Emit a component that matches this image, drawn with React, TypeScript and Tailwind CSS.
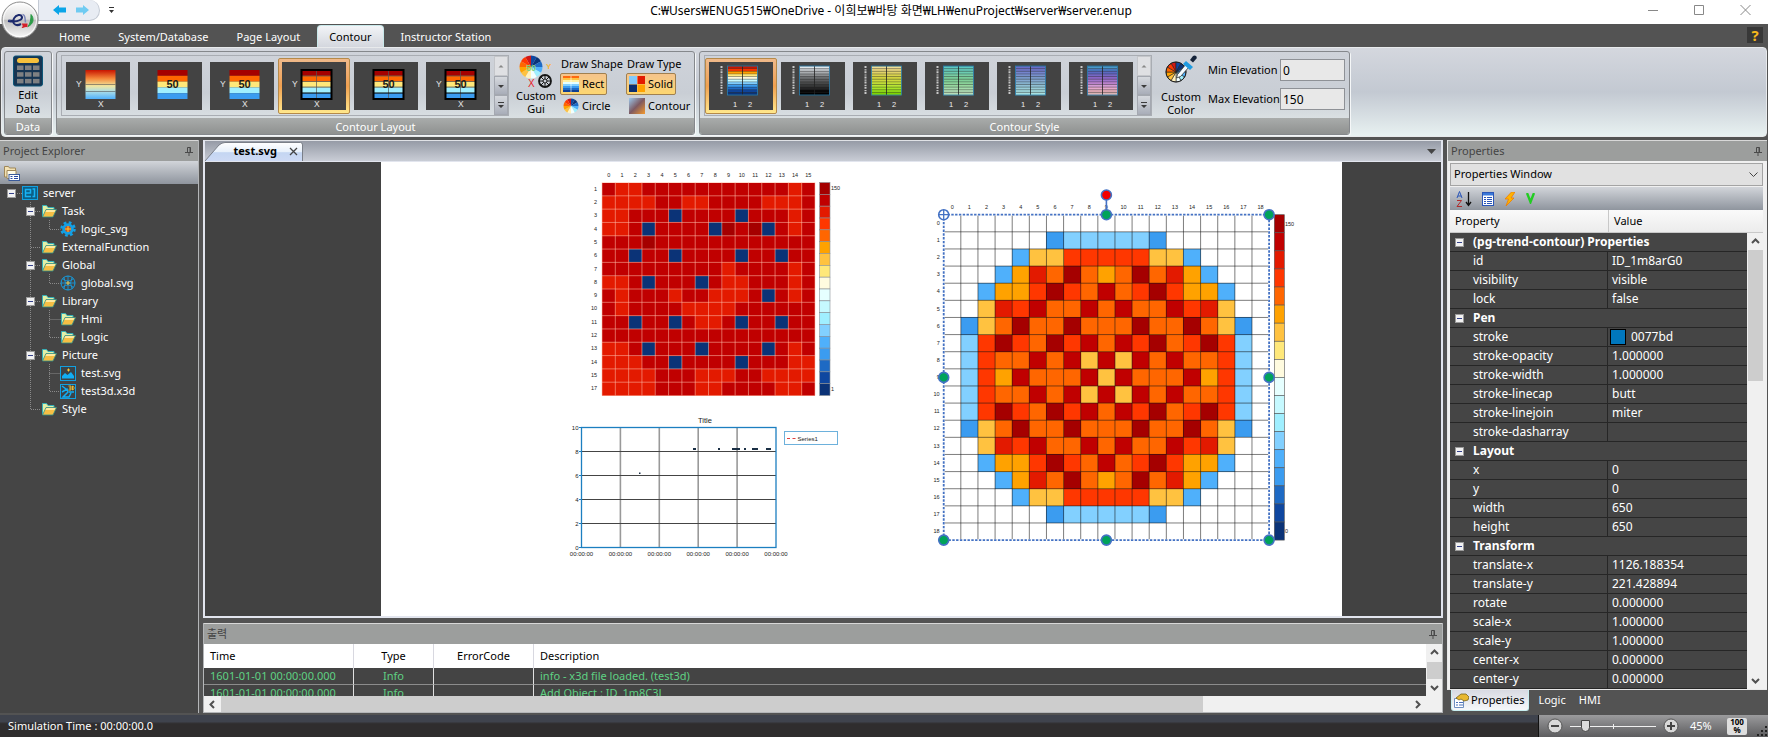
import React from "react";

const PALETTE = [
  "#a50000", "#c00000", "#e31a00", "#ff3700", "#ff6600", "#ffa200", "#ffc240", "#ffe87a", "#fffbdf",
  "#e6ffff", "#c6f9ff", "#a0efff", "#82d0ff", "#4fb0fb", "#3b9cf0", "#1e6ac4", "#0f47a0", "#0b3377",
];

/* Letters a..r index PALETTE, a dot is an empty cell. */
const SQUARE_ROWS = [
  "bccbbbbbbbbbbbcb",
  "ccccbbccbbbbcccb",
  "ccbbbrbbbbrbbbcb",
  "ccbrbbbbrabarbcb",
  "bbbabbbbbbbbbbbb",
  "bbrbbrbbbbrbbrbb",
  "bbbbbbbbbcbbbbcb",
  "ccbrbbbrbccbbbcb",
  "bcbbbcbbcccbrbcb",
  "bcbbbbccccbbbbbb",
  "bbrbbrbccbrbbrbb",
  "bbbbbbbbbbbbbbbb",
  "ccbrbbbrbbbbrbcb",
  "cccbbrbbbbrbbbcc",
  "ccccbbbcccbbcccc",
  "ccccbbbccbbbbccb",
];

const CORE_TOP = [
  "...................",
  "......ommmmmo......",
  "....nggdddddggn....",
  "...nfceaefeaecfn...",
  "..nffdadebedadffn..",
  "..gcdbeebebeebdcg..",
  ".ogeaeeaeeeaeeaego.",
  ".mdadeadbebdaedadm.",
  ".mdeebebgbgbebeedm.",
];
const CORE_ROWS = [...CORE_TOP, ".mdfbeeebgbeeebfdm.", ...[...CORE_TOP].reverse()];

function Cells({ rows, x, y, s }: { rows: string[]; x: number; y: number; s: number }) {
  return (
    <g shapeRendering="crispEdges">
      {rows.map((row, r) =>
        row.split("").map((c, i) =>
          c === "." ? null : (
            <rect key={`${r}-${i}`} x={x + i * s} y={y + r * s} width={s} height={s} fill={PALETTE[c.charCodeAt(0) - 97]} />
          )
        )
      )}
    </g>
  );
}

function Grid({ x, y, n, size, stroke, width = 1 }: { x: number; y: number; n: number; size: number; stroke: string; width?: number }) {
  const step = size / n;
  return (
    <g stroke={stroke} strokeWidth={width}>
      {Array.from({ length: n + 1 }, (_, i) => (
        <React.Fragment key={i}>
          <path d={`M${x + i * step} ${y}v${size}`} />
          <path d={`M${x} ${y + i * step}h${size}`} />
        </React.Fragment>
      ))}
    </g>
  );
}

function ColorBar({ x, y, w, h, stroke }: { x: number; y: number; w: number; h: number; stroke: string }) {
  return (
    <g stroke={stroke} strokeWidth="0.6">
      {PALETTE.map((c, i) => (
        <rect key={c} x={x} y={y + (i * h) / 18} width={w} height={h / 18} fill={c} />
      ))}
    </g>
  );
}

function SquareContour() {
  const labels = [1, 2, 3, 4, 5, 6, 7, 8, 9, 10, 11, 12, 13, 14, 15, 17];
  const s = 213 / 16;
  return (
    <svg className="absolute left-[206px] top-[6px]" width="265" height="235" fontFamily="Liberation Sans, sans-serif" fontSize="5.5" fill="#222">
      {labels.map((l, i) => (
        <React.Fragment key={l}>
          <text x={15 + (i + 0.5) * s} y="9" textAnchor="middle">{i}</text>
          <text x="10" y={14 + (i + 0.65) * s} textAnchor="end">{l}</text>
        </React.Fragment>
      ))}
      <Cells rows={SQUARE_ROWS} x={15} y={14.5} s={s} />
      <Grid x={15} y={14.5} n={16} size={213} stroke="rgba(255,190,170,0.55)" />
      <ColorBar x={232.7} y={14.5} w={10.3} h={213} stroke="#8a8f96" />
      <text x="244" y="22">150</text>
      <text x="244" y="223">1</text>
    </svg>
  );
}

function Handle({ x, y, fill = "#00a35a" }: { x: number; y: number; fill?: string }) {
  return <circle cx={x} cy={y} r="5" fill={fill} stroke="#4472c4" strokeWidth="1.6" />;
}

function CoreContour() {
  const size = 325.4;
  const s = size / 19;
  const x = 22.7;
  const y = 32.7;
  const m = size / 2;
  return (
    <svg className="absolute left-[540px] top-[20px]" width="390" height="366" fontFamily="Liberation Sans, sans-serif" fontSize="5.5" fill="#222">
      {CORE_ROWS.map((_, i) => (
        <React.Fragment key={i}>
          <text x={x + (i + 0.5) * s} y="27" textAnchor="middle">{i}</text>
          <text x={x - 4} y={y + (i + 0.6) * s} textAnchor="end">{i}</text>
        </React.Fragment>
      ))}
      <Cells rows={CORE_ROWS} x={x} y={y} s={s} />
      <Grid x={x} y={y} n={19} size={size} stroke="rgba(20,20,20,0.62)" width={0.9} />
      <ColorBar x={353.3} y={y} w={10} h={size} stroke="#555" />
      <text x="364" y="44">150</text>
      <text x="364" y="351">0</text>
      <rect x={x} y={y} width={size} height={size} fill="none" stroke="#fff" strokeWidth="2" />
      <rect x={x} y={y} width={size} height={size} fill="none" stroke="#4472c4" strokeWidth="1.8" strokeDasharray="2.4 1.4" />
      <path d={`M${x + m} ${y}V13`} stroke="#4472c4" strokeWidth="1.6" />
      <Handle x={x + m} y={13} fill="#f40000" />
      <Handle x={x + m} y={y} />
      <Handle x={x + size} y={y} />
      <Handle x={x} y={y + m} />
      <Handle x={x + size} y={y + m} />
      <Handle x={x} y={y + size} />
      <Handle x={x + m} y={y + size} />
      <Handle x={x + size} y={y + size} />
      <circle cx={x} cy={y} r="5" fill="#fff" stroke="#4472c4" strokeWidth="1.6" />
      <path d={`M${x - 5} ${y}h10M${x} ${y - 5}v10`} stroke="#4472c4" strokeWidth="1.3" />
    </svg>
  );
}

function TrendChart() {
  return (
    <svg className="absolute left-[181px] top-[248px]" width="290" height="150" fontFamily="Liberation Sans, sans-serif" fontSize="6" fill="#222">
      <text x="143" y="13" textAnchor="middle" fontSize="7.5">Title</text>
      <g stroke="#999" strokeWidth="1.6">
        {[1, 2, 3, 4].map((i) => <path key={i} d={`M${19.5 + i * 38.9} 17.5v120`} />)}
      </g>
      <g stroke="#444" strokeWidth="1">
        {[1, 2, 3, 4].map((i) => <path key={i} d={`M19.5 ${17.5 + i * 24}h194.5`} />)}
      </g>
      <rect x="19.5" y="17.5" width="194.5" height="120" fill="none" stroke="#1c7fc0" strokeWidth="1.3" />
      {[10, 8, 6, 4, 2, 0].map((v, i) => (
        <React.Fragment key={v}>
          <path d={`M17 ${17.5 + i * 24}h2.5`} stroke="#1c7fc0" />
          <text x="16.5" y={19.5 + i * 24} textAnchor="end">{v}</text>
          <text x={19.5 + i * 38.9} y="146" textAnchor="middle">00:00:00</text>
        </React.Fragment>
      ))}
      <g fill="#1a2f45">
        <rect x="131" y="38" width="3" height="2" />
        <rect x="156" y="38" width="2" height="2" />
        <rect x="170" y="38" width="8" height="2" />
        <rect x="182" y="38" width="2" height="2" />
        <rect x="190" y="38" width="6" height="2" />
        <rect x="204" y="38" width="5" height="2" />
        <rect x="77" y="62.5" width="1.5" height="1.5" />
      </g>
      <rect x="222.5" y="21.5" width="53" height="13" fill="#fff" stroke="#6db1dc" />
      <path d="M225 28.5h3M230.5 28.5h3" stroke="#e04040" />
      <text x="235.5" y="30.5">Series1</text>
    </svg>
  );
}

/* ---------- icons ---------- */

function AppLogo() {
  return (
    <svg width="38" height="38" viewBox="0 0 38 38" aria-hidden="true">
      <defs>
        <linearGradient id="orb" x1="0" y1="0" x2="0" y2="1">
          <stop offset="0" stopColor="#fff" />
          <stop offset="0.48" stopColor="#dcdcdc" />
          <stop offset="0.5" stopColor="#bdbdbd" />
          <stop offset="1" stopColor="#fafafa" />
        </linearGradient>
      </defs>
      <circle cx="19" cy="19" r="18" fill="url(#orb)" stroke="#8d8d8d" />
      <circle cx="19" cy="19" r="16.5" fill="none" stroke="#fff" strokeOpacity=".8" />
      <path d="M7 20c5 1 9 .8 12-1 3.500-2 2-5.500-1.500-5-4 .6-6.500 5.500-4.500 8.500 1.500 2 4.500 1.800 7 .5" fill="none" stroke="#1d2a6d" strokeWidth="2" />
      <path d="M7 18.500l6 .5v2.500z" fill="#1d2a6d" />
      <path d="M21.500 13.500c3 0 2.500 5 3 8" fill="none" stroke="#7d86b8" strokeWidth="1.5" />
      <path d="M20.500 22.500h6v4c-2-1.500-4 .8-6 .5 1.500-1 1.500-2.800 0-4.500z" fill="#d41f2a" />
      <path d="M30 13.500c3.500 4 2.500 9.500-3 12 2.500-3 3-7.500 3-12z" fill="#2d9c48" stroke="#2d9c48" />
    </svg>
  );
}

function CalculatorIcon() {
  return (
    <svg width="32" height="32" viewBox="0 0 32 32" aria-hidden="true">
      <rect x="1.5" y="1" width="29" height="30" rx="2" fill="#163553" stroke="#0c5678" />
      <rect x="5" y="3" width="22" height="5" rx="2.5" fill="#f5c03c" />
      {[0, 1, 2].map((r) => [0, 1, 2].map((c) => <rect key={`${r}${c}`} x={5 + c * 8} y={10.5 + r * 6.7} width="6.5" height="4.500" fill="#7e8082" />))}
    </svg>
  );
}

const WHEEL = ["#d01818", "#0f47a0", "#0b3377", "#1e6ac4", "#4fb0fb", "#a0efff", "#f2ffff", "#fff1c0", "#ffc240", "#ffa200", "#ff6600", "#ff3700"];

function Wheel({ cx, cy, r, ring }: { cx: number; cy: number; r: number; ring?: boolean }) {
  return (
    <g>
      {WHEEL.map((c, i) => {
        const a = ((i * 30 - 120) * Math.PI) / 180;
        const b = ((i * 30 - 90) * Math.PI) / 180;
        return (
          <path
            key={c}
            d={`M${cx} ${cy}L${cx + r * Math.cos(a)} ${cy + r * Math.sin(a)}A${r} ${r} 0 0 1 ${cx + r * Math.cos(b)} ${cy + r * Math.sin(b)}Z`}
            fill={c}
            stroke={ring ? "#222" : "none"}
            strokeWidth="0.6"
          />
        );
      })}
      {ring && <circle cx={cx} cy={cy} r={r} fill="none" stroke="#222" />}
    </g>
  );
}

function CustomGuiIcon() {
  return (
    <svg width="34" height="34" viewBox="0 0 34 34" fontFamily="Liberation Sans, sans-serif" aria-hidden="true">
      <Wheel cx={12} cy={12} r={11.5} />
      <text x="12" y="16" textAnchor="middle" fontSize="9" fontWeight="bold" fill="#7fcf7a">50</text>
      <text x="27" y="14" fontSize="8" fontWeight="bold" fill="#f5b63c">Y</text>
      <text x="9" y="32" fontSize="10" fill="#e8202a">X</text>
      <g fill="none" stroke="#151515">
        <circle cx="26" cy="26" r="6" strokeWidth="1.8" />
        <circle cx="26" cy="26" r="2" />
        <path d="M26 20v4M26 28v4M20 26h4M28 26h4M21.8 21.8l2.8 2.8M27.4 27.4l2.8 2.8M30.2 21.8l-2.8 2.8M24.6 27.4l-2.8 2.8" />
      </g>
    </svg>
  );
}

function CustomColorIcon() {
  return (
    <svg width="34" height="30" viewBox="0 0 34 30" aria-hidden="true">
      <Wheel cx={12} cy={17} r={10} ring />
      <path d="M13.500 19.500l9-11 3 3-9 10-4 1.500z" fill="#f4fbff" stroke="#333" strokeWidth=".8" />
      <path d="M22 6l7 6-3 3-7-6z" fill="#1f9be0" />
      <path d="M26 5l3-4c2-1.500 4.500.5 3.500 2.500l-3.500 4z" fill="#14233a" />
    </svg>
  );
}

function RectIcon() {
  return (
    <svg width="16" height="16" viewBox="0 0 16 16" aria-hidden="true">
      {["#ff6a10", "#ffc240", "#fff1a8", "#e6ffff", "#82d0ff", "#3b9cf0", "#1e6ac4", "#0f3f92"].map((c, i) => (
        <rect key={c} y={i * 2} width="16" height="2" fill={c} />
      ))}
      <path d="M8 0v16" stroke="#fff" strokeOpacity=".6" />
    </svg>
  );
}

function SolidIcon() {
  return (
    <svg width="16" height="16" viewBox="0 0 16 16" aria-hidden="true">
      <rect width="8" height="8" fill="#82c8fa" />
      <rect x="8.5" width="7.5" height="8" fill="#e31a00" />
      <rect y="8.5" width="8" height="7.5" fill="#0b2f70" />
      <rect x="8.5" y="8.5" width="7.5" height="7.5" fill="#ffa200" />
    </svg>
  );
}

function ContourIcon() {
  return (
    <svg width="16" height="16" viewBox="0 0 16 16" aria-hidden="true">
      <defs>
        <linearGradient id="warm" x1="0" y1="0" x2="1" y2="1">
          <stop offset="0" stopColor="#9cc8ec" />
          <stop offset="0.5" stopColor="#7d5a62" />
          <stop offset="1" stopColor="#f59a2e" />
        </linearGradient>
      </defs>
      <rect width="16" height="16" fill="url(#warm)" />
    </svg>
  );
}

function FolderIcon() {
  return (
    <svg width="16" height="14" viewBox="0 0 16 14" aria-hidden="true">
      <path d="M1.500 12.500V1.500h4l1.500 2h6V6" fill="#e2f0a8" stroke="#35b0b8" />
      <path d="M1.500 13L5 5.500H15.500L12 13z" fill="#f6bf45" stroke="#2d8f8a" strokeWidth=".8" />
      <path d="M5.500 6h9l-1 2H4.500z" fill="#fde9a0" />
    </svg>
  );
}

function ServerIcon() {
  return (
    <svg width="16" height="14" viewBox="0 0 16 14" aria-hidden="true">
      <rect x=".5" y=".5" width="15" height="13" fill="#0d5f86" stroke="#12a0e0" />
      <path d="M9 10.500H3.500V3.500H8.500v3.500H4M10.500 3h2v7.500h-2" fill="none" stroke="#19b4f5" strokeWidth="1.5" />
    </svg>
  );
}

function GearIcon() {
  return (
    <svg width="16" height="16" viewBox="0 0 16 16" aria-hidden="true">
      <circle cx="8" cy="8" r="6.5" fill="none" stroke="#14a0e4" strokeWidth="2.5" strokeDasharray="2.7 2.4" />
      <circle cx="8" cy="8" r="5.8" fill="#14a0e4" />
      <circle cx="8" cy="8" r="3" fill="#c8501e" />
      <path d="M8 5v6M5 8h6" stroke="#ffc832" />
    </svg>
  );
}

function GlobeIcon() {
  return (
    <svg width="16" height="16" viewBox="0 0 16 16" fill="none" stroke="#14a0e4" aria-hidden="true">
      <circle cx="8" cy="8" r="7" />
      <path d="M8 1v14M1 8h14M3 4q5 4 10 0M3 12q5-4 10 0M4 2.500q3 5.500 0 11M12 2.500q-3 5.500 0 11" strokeWidth=".8" />
      <path d="M6 8h4M8 6v4" stroke="#f0c040" />
    </svg>
  );
}

function ImageFileIcon() {
  return (
    <svg width="16" height="15" viewBox="0 0 16 15" aria-hidden="true">
      <rect x=".5" y=".5" width="15" height="14" fill="#3b4348" stroke="#12a0e0" />
      <path d="M2 12.500V10l3-3 2.500 2L11 6l3 4v2.500z" fill="#12aef5" />
      <path d="M8.500 2.500v3M7 4h3" stroke="#ffc832" />
    </svg>
  );
}

function ModelFileIcon() {
  return (
    <svg width="16" height="15" viewBox="0 0 16 15" aria-hidden="true">
      <rect x=".5" y=".5" width="15" height="14" fill="#3b4348" stroke="#12a0e0" />
      <path d="M2 2l4 3M2 8l5-3 1 3-5 5h6l2-4M9 8h5" stroke="#12aef5" strokeWidth="1.5" fill="none" />
      <path d="M8.500 2h2.500v4H8.500M9 4h2M12.500 2v4c2 0 2-4 0-4z" stroke="#ffc832" strokeWidth=".9" fill="none" />
    </svg>
  );
}

function Pin() {
  return (
    <svg width="8" height="9" viewBox="0 0 8 9" fill="none" stroke="#4a4a4a" aria-hidden="true">
      <path d="M2.500 5V.5h3V5M0 5.500h8M4 6v3M5 .5V5" />
    </svg>
  );
}

function Chevron({ dir, className = "" }: { dir: "up" | "down" | "left" | "right"; className?: string }) {
  const d = {
    up: "M1 6l3.500-3.500L8 6",
    down: "M1 3l3.500 3.500L8 3",
    left: "M6 1L2.500 4.500 6 8",
    right: "M3 1l3.500 3.500L3 8",
  }[dir];
  return (
    <svg width="9" height="9" viewBox="0 0 9 9" fill="none" stroke="#505050" strokeWidth="2" className={className} aria-hidden="true">
      <path d={d} />
    </svg>
  );
}

/* ---------- ribbon ---------- */

function LayoutThumb({ grid, axes, value, smooth }: { grid?: boolean; axes?: boolean; value?: boolean; smooth?: boolean }) {
  return (
    <svg width="64" height="48" viewBox="0 0 64 48" fontFamily="Liberation Sans, sans-serif" aria-hidden="true">
      <defs>
        <linearGradient id="smooth" x1="0" y1="0" x2="0" y2="1">
          <stop offset="0" stopColor="#c81400" />
          <stop offset=".3" stopColor="#f58a3c" />
          <stop offset=".55" stopColor="#f0e6a0" />
          <stop offset=".75" stopColor="#a8dce8" />
          <stop offset="1" stopColor="#4fb0fb" />
        </linearGradient>
      </defs>
      <rect width="64" height="48" fill="#434343" />
      {smooth ? (
        <g>
          <rect x="19.5" y="8" width="30" height="29" fill="url(#smooth)" />
          <path d="M19.5 22.5h30M19.5 29.5h30" stroke="#555" strokeOpacity=".6" />
        </g>
      ) : (
        <g>
          {["#a50000", "#ff6600", "#ffe87a", "#a0efff", "#3b9cf0"].map((c, i) => (
            <rect key={c} x="19.5" y={8 + i * 5.8} width="30" height="5.8" fill={c} />
          ))}
        </g>
      )}
      {grid && (
        <g fill="none">
          <path d="M34.5 8v29M19.5 14h30M19.5 19.5h30M19.5 25h30" stroke="#555" strokeOpacity=".7" />
          <rect x="19.5" y="8" width="30" height="29" stroke="#000" strokeWidth="2" />
          <path d="M19.5 31h30" stroke="#000" />
        </g>
      )}
      {value && <text x="34.5" y="26" fontSize="11" fontWeight="bold" textAnchor="middle" fill="#1a1a1a">50</text>}
      {axes && (
        <g fill="#e4e4e4" fontSize="8.5">
          <text x="10" y="24.5">Y</text>
          <text x="32" y="44.5">X</text>
        </g>
      )}
    </svg>
  );
}

function StyleThumb({ colors }: { colors: string[] }) {
  const h = 29 / colors.length;
  return (
    <svg width="64" height="48" viewBox="0 0 64 48" fontFamily="Liberation Sans, sans-serif" aria-hidden="true">
      <rect width="64" height="48" fill="#434343" />
      {colors.map((c, i) => (
        <rect key={i} x="18.5" y={4 + i * h} width="30" height={h + 0.2} fill={c} />
      ))}
      {colors.map((_, i) => (
        <path key={i} d={`M18.5 ${4 + i * h}h30`} stroke="#222" strokeOpacity=".5" strokeWidth=".7" />
      ))}
      <path d="M33.5 4v29" stroke="#222" strokeOpacity=".8" />
      <rect x="18.5" y="4" width="30" height="29" fill="none" stroke="#2a7fb0" strokeWidth=".8" />
      <path d="M12.5 4v29" stroke="#c8c8c8" strokeWidth="2" strokeDasharray="2 1.2 1.2 .8" />
      <g fill="#f0f0f0" fontSize="7.5">
        <text x="24" y="44.5">1</text>
        <text x="39" y="44.5">2</text>
      </g>
    </svg>
  );
}

const STYLES: { name: string; colors: string[] }[] = [
  { name: "Rainbow", colors: ["#c81400", "#ff3700", "#ffa200", "#ffe87a", "#fffbdf", "#c6f9ff", "#82d0ff", "#3b9cf0", "#1e6ac4", "#0f47a0", "#0b3377"] },
  { name: "Gray", colors: ["#dfe5ea", "#c4c8cc", "#a8abae", "#8a8c8e", "#6e7072", "#5a5b5d", "#48494a", "#363738", "#242425", "#080808", "#000000"] },
  { name: "Lime", colors: ["#efdc94", "#e8d680", "#e0d268", "#d8d24e", "#d4d640", "#ccda3c", "#c4e038", "#b8e634", "#a8e428", "#94e018", "#80d400"] },
  { name: "Green", colors: ["#5cc8c0", "#66c8b8", "#6cccb0", "#78cca4", "#7cd09c", "#80d098", "#8cd69c", "#98d8a0", "#a4dcac", "#b0dcb4", "#b8dcb8"] },
  { name: "Blue", colors: ["#6a6cc8", "#7078c8", "#7484cc", "#7890cc", "#7c9ccc", "#84a8d0", "#88b4d0", "#90c0d4", "#98ccd8", "#a0d8dc", "#a8e0e0"] },
  { name: "Purple", colors: ["#4a98c8", "#4c7cc4", "#5c68c0", "#7468c4", "#8c68c8", "#a074cc", "#bc84d0", "#d49cd4", "#e4a8cc", "#e4acb8", "#dcb4b4"] },
];

const LAYOUTS: { name: string; props: React.ComponentProps<typeof LayoutThumb>; selected?: boolean }[] = [
  { name: "Smooth with axes", props: { smooth: true, axes: true } },
  { name: "Values", props: { value: true } },
  { name: "Values with axes", props: { value: true, axes: true } },
  { name: "Grid with axes", props: { grid: true, axes: true }, selected: true },
  { name: "Grid with values", props: { grid: true, value: true } },
  { name: "Grid with values and axes", props: { grid: true, value: true, axes: true } },
];

function GalleryItem({ selected, label, children }: { selected?: boolean; label: string; children: React.ReactNode }) {
  return (
    <button
      aria-label={label}
      className={
        selected
          ? "flex h-14 w-[72px] items-center justify-center rounded-[2px] border border-[#b58a4a] bg-linear-to-b from-[#efb98a] via-[#f0a050] to-[#ffe88c]"
          : "flex h-14 w-[72px] items-center justify-center"
      }
    >
      {children}
    </button>
  );
}

function Gallery({ children }: { children: React.ReactNode }) {
  return (
    <div className="flex h-[61px] shrink-0 border border-[#a9adb3]">
      <div className="flex items-center">{children}</div>
      <div className="flex w-[14px] flex-col">
        {["M1.500 4.500L4 2l2.500 2.500z", "M1 2h6L4 5z", "M1 0h6v1H1zM1 3h6L4 6z"].map((d, i) => (
          <button
            key={d}
            aria-label={["Scroll up", "Scroll down", "More"][i]}
            className={
              i === 0
                ? "flex flex-1 items-center justify-center border border-[#c4c6ca] bg-[#dfe0e3]"
                : "flex flex-1 items-center justify-center border border-[#a4a8b0] bg-linear-to-b from-[#d6d9de] to-[#a9aeb9]"
            }
          >
            <svg width="8" height="6" viewBox="0 0 8 6" fill={i === 0 ? "#888" : "#3c3c3c"} aria-hidden="true"><path d={d} /></svg>
          </button>
        ))}
      </div>
    </div>
  );
}

function Group({ title, children }: { title: string; children: React.ReactNode }) {
  return (
    <section className="flex h-[84px] flex-col overflow-hidden rounded-[3px] border border-[#85888c] bg-linear-to-b from-[#cfd3da] via-[#c9ced5] to-[#e4ebeb] shadow-[1px_1px_0_#f5f7f8]">
      <div className="flex min-h-0 flex-1 pt-[3px]">{children}</div>
      <h2 className="h-4 shrink-0 bg-linear-to-b from-[#a9acab] to-[#8f9190] text-center leading-[17px] text-white">{title}</h2>
    </section>
  );
}

function Toggle({ on, icon, label }: { on?: boolean; icon: React.ReactNode; label: string }) {
  return (
    <button
      aria-pressed={!!on}
      className={
        on
          ? "flex h-[22px] items-center gap-[3px] rounded-[2px] border border-[#a08050] bg-linear-to-b from-[#f5c48c] to-[#fcd670] px-[2px]"
          : "flex h-[22px] items-center gap-[3px] border border-transparent px-[2px]"
      }
    >
      {icon}
      {label}
    </button>
  );
}

function Ribbon() {
  return (
    <div className="mx-px flex h-[90px] shrink-0 gap-1 rounded-[4px] border border-[#e8eaec] bg-linear-to-b from-[#d4d7de] via-[#c3c9d2] to-[#e8f1f1] px-[2px] pt-[3px]">
      <Group title="Data">
        <button className="flex w-[46px] flex-col items-center leading-[14px]">
          <CalculatorIcon />
          <span className="mt-px block">Edit<br />Data</span>
        </button>
      </Group>
      <Group title="Contour Layout">
        <div className="flex w-[637px] pl-1">
          <Gallery>
            {LAYOUTS.map((l) => (
              <GalleryItem key={l.name} label={l.name} selected={l.selected}>
                <LayoutThumb {...l.props} />
              </GalleryItem>
            ))}
          </Gallery>
          <button className="ml-[3px] flex w-12 flex-col items-center leading-[13px]">
            <CustomGuiIcon />
            <span className="block">Custom<br />Gui</span>
          </button>
          <div className="flex w-[66px] flex-col items-start">
            <span className="h-[18px] whitespace-nowrap pl-px leading-[17px]">Draw Shape</span>
            <Toggle on icon={<RectIcon />} label="Rect" />
            <Toggle icon={<svg width="16" height="16" aria-hidden="true"><Wheel cx={8} cy={8} r={7.5} /></svg>} label="Circle" />
          </div>
          <div className="flex flex-col items-start">
            <span className="h-[18px] whitespace-nowrap pl-px leading-[17px]">Draw Type</span>
            <Toggle on icon={<SolidIcon />} label="Solid" />
            <Toggle icon={<ContourIcon />} label="Contour" />
          </div>
        </div>
      </Group>
      <Group title="Contour Style">
        <div className="flex w-[649px] pl-1">
          <Gallery>
            {STYLES.map((s, i) => (
              <GalleryItem key={s.name} label={s.name} selected={i === 0}>
                <StyleThumb colors={s.colors} />
              </GalleryItem>
            ))}
          </Gallery>
          <button className="ml-1 flex w-[50px] flex-col items-center leading-[13px]">
            <CustomColorIcon />
            <span className="mt-[5px] block">Custom<br />Color</span>
          </button>
          <div className="mr-1 flex flex-1 flex-col gap-[7px] pl-[2px] pt-1">
            <label className="flex items-center justify-between whitespace-nowrap">
              Min Elevation
              <input defaultValue="0" className="h-[22px] w-[65px] border border-[#8e9196] bg-[#e8e8e8] px-[2px] text-[12px]" />
            </label>
            <label className="flex items-center justify-between whitespace-nowrap">
              Max Elevation
              <input defaultValue="150" className="h-[22px] w-[65px] border border-[#8e9196] bg-[#e8e8e8] px-[2px] text-[12px]" />
            </label>
          </div>
        </div>
      </Group>
    </div>
  );
}

/* ---------- project tree ---------- */

const TREE: { level: number; label: string; icon: React.ReactNode; open?: boolean }[] = [
  { level: 0, label: "server", icon: <ServerIcon />, open: true },
  { level: 1, label: "Task", icon: <FolderIcon />, open: true },
  { level: 2, label: "logic_svg", icon: <GearIcon /> },
  { level: 1, label: "ExternalFunction", icon: <FolderIcon /> },
  { level: 1, label: "Global", icon: <FolderIcon />, open: true },
  { level: 2, label: "global.svg", icon: <GlobeIcon /> },
  { level: 1, label: "Library", icon: <FolderIcon />, open: true },
  { level: 2, label: "Hmi", icon: <FolderIcon /> },
  { level: 2, label: "Logic", icon: <FolderIcon /> },
  { level: 1, label: "Picture", icon: <FolderIcon />, open: true },
  { level: 2, label: "test.svg", icon: <ImageFileIcon /> },
  { level: 2, label: "test3d.x3d", icon: <ModelFileIcon /> },
  { level: 1, label: "Style", icon: <FolderIcon /> },
];

const INDENT = ["pl-[7px]", "pl-[26px]", "pl-[45px]"];

function Expander() {
  return (
    <svg width="9" height="9" viewBox="0 0 9 9" aria-hidden="true">
      <rect x=".5" y=".5" width="8" height="8" fill="#f2f2f2" stroke="#9a9a9a" />
      <path d="M2 4.500h5" stroke="#33408a" />
    </svg>
  );
}

function ProjectExplorer() {
  return (
    <aside className="flex w-[199px] shrink-0 flex-col border-r border-[#b4b6b8] bg-[#454545] text-white">
      <PanelHeader title="Project Explorer" />
      <div className="flex h-[23px] items-center bg-linear-to-b from-[#d2d5da] to-[#8f959e] pl-1">
        <button aria-label="Properties view">
          <svg width="16" height="16" viewBox="0 0 16 16" aria-hidden="true">
            <path d="M.5 1.500h4l1 1.500h6v9H.5z" fill="#f3e2b4" stroke="#a08858" />
            <path d="M3 5.500h9v8H3z" fill="#fffbe8" stroke="#a08858" />
            <rect x="5" y="9.5" width="10.5" height="6" fill="#fff" stroke="#3a5a9a" />
            <path d="M6.500 11.500h2M10 11.500h4M6.500 13.500h2M10 13.500h4" stroke="#2848a0" />
          </svg>
        </button>
      </div>
      <div className="relative text-[12px]">
        <svg className="absolute left-0 top-0" width="62" height="236" stroke="#8a8a8a" strokeDasharray="1 1" fill="none" aria-hidden="true">
          <path d="M17 9.500h5M30.500 18v208M35 27.500h6M31 63.500h10M35 81.500h6M35 117.500h6M35 171.500h6M31 225.500h10" />
          <path d="M49.500 36v9.500h11M49.500 90v9.500h11M49.500 126v27.500h11M49.500 135.500h11M49.500 180v27.500h11M49.500 189.500h11" />
        </svg>
        <ul className="relative font-['Open_Sans',sans-serif] text-[11px]">
          {TREE.map((n) => (
            <li key={n.label + n.level} className={`flex h-[18px] items-center ${INDENT[n.level]}`}>
              {n.open ? <button aria-label={`Collapse ${n.label}`} className="w-[9px]"><Expander /></button> : <span className="w-[9px]" />}
              <span className="ml-[6px] w-4">{n.icon}</span>
              <span className="ml-[5px] font-['Noto_Sans',sans-serif]">{n.label}</span>
            </li>
          ))}
        </ul>
      </div>
    </aside>
  );
}

function PanelHeader({ title }: { title: string }) {
  return (
    <div className="flex h-[21px] shrink-0 items-center justify-between border-t border-[#d8d8d8] bg-[#9c9e9d] pl-[3px] pr-[5px] text-[#444]">
      <h2>{title}</h2>
      <button aria-label={`Pin ${title}`}><Pin /></button>
    </div>
  );
}

/* ---------- document ---------- */

function DocumentArea() {
  return (
    <main className="flex min-h-0 flex-1 flex-col border-b-2 border-l-2 border-r-2 border-[#e2e5ee]">
      <div className="flex h-[21px] shrink-0 items-end justify-between border-t border-[#e0e2e6] bg-linear-to-b from-[#969ba6] to-[#c9cdd6] pr-[5px]">
        <div className="relative flex h-[19px] w-[98px] items-center justify-end gap-3 pr-[5px]">
          <svg className="absolute inset-0" width="98" height="19" aria-hidden="true">
            <defs>
              <linearGradient id="tab" x1="0" y1="0" x2="0" y2="1">
                <stop offset="0" stopColor="#fff" />
                <stop offset="0.5" stopColor="#e8f1fb" />
                <stop offset="0.55" stopColor="#c4d6f2" />
                <stop offset="1" stopColor="#cddaf4" />
              </linearGradient>
            </defs>
            <path d="M0 19L14 3Q17 .5 20 .5H95.500Q97.500 .5 97.500 3V19" fill="url(#tab)" stroke="#7a7f88" />
          </svg>
          <span className="relative font-bold">test.svg</span>
          <button aria-label="Close test.svg" className="relative">
            <svg width="9" height="9" viewBox="0 0 9 9" stroke="#444" strokeWidth="1.3" aria-hidden="true"><path d="M1 1l7 7M8 1L1 8" /></svg>
          </button>
        </div>
        <button aria-label="Open documents" className="mb-[7px]">
          <svg width="9" height="5" viewBox="0 0 9 5" fill="#454545" aria-hidden="true"><path d="M0 0h9L4.500 5z" /></svg>
        </button>
      </div>
      <div className="min-h-0 flex-1 overflow-hidden border-t border-[#e2e5ee] bg-[#424242] pl-[176px] pr-[99px]">
        <div className="relative h-full bg-white">
          <SquareContour />
          <TrendChart />
          <CoreContour />
        </div>
      </div>
    </main>
  );
}

function OutputPanel() {
  const rows = [
    ["1601-01-01 00:00:00.000", "Info", "", "info - x3d file loaded. (test3d)"],
    ["1601-01-01 00:00:00.000", "Info", "", "Add Object : ID_1m8C3L"],
  ];
  return (
    <section className="flex h-[90px] shrink-0 flex-col border-b border-l border-r border-[#b4b6b8] bg-[#f0f0f0]">
      <PanelHeader title="출력" />
      <div className="flex h-[52px] overflow-hidden">
        <div className="flex-1 overflow-hidden bg-[#444]">
          <table className="w-full table-fixed border-separate border-spacing-0 whitespace-nowrap">
            <colgroup>
              <col className="w-[150px]" />
              <col className="w-20" />
              <col className="w-[100px]" />
              <col />
            </colgroup>
            <thead>
              <tr className="h-6 bg-white text-black">
                <th className="border-r border-[#d8d8e0] p-0 pl-[6px] text-left font-normal">Time</th>
                <th className="border-r border-[#d8d8e0] p-0 font-normal">Type</th>
                <th className="border-r border-[#d8d8e0] p-0 font-normal">ErrorCode</th>
                <th className="p-0 pl-[6px] text-left font-normal">Description</th>
              </tr>
            </thead>
            <tbody className="text-[#5fd183]">
              {rows.map((r) => (
                <tr key={r[3]} className="h-[17px]">
                  <td className="border-b border-r border-b-[#8c8c8c] border-r-[#e0e0e0] p-0 pl-[6px] leading-4">{r[0]}</td>
                  <td className="border-b border-r border-b-[#8c8c8c] border-r-[#e0e0e0] p-0 text-center leading-4">{r[1]}</td>
                  <td className="border-b border-r border-b-[#8c8c8c] border-r-[#e0e0e0] p-0 leading-4">{r[2]}</td>
                  <td className="border-b border-b-[#8c8c8c] p-0 pl-[6px] leading-4">{r[3]}</td>
                </tr>
              ))}
            </tbody>
          </table>
        </div>
        <div className="flex w-4 flex-col items-center justify-between bg-[#f0f0f0] py-[4px]">
          <Chevron dir="up" />
          <span className="h-[17px] w-[15px] bg-[#cdcdcd]" />
          <Chevron dir="down" />
        </div>
      </div>
      <div className="flex h-4 items-center pr-4">
        <Chevron dir="left" className="mx-1" />
        <span className="h-full w-[982px] max-w-[82%] bg-[#cdcdcd]" />
        <Chevron dir="right" className="ml-auto mr-1" />
      </div>
    </section>
  );
}

/* ---------- properties ---------- */

const PROPS: { section: string; rows: [string, string][] }[] = [
  { section: "(pg-trend-contour) Properties", rows: [["id", "ID_1m8arG0"], ["visibility", "visible"], ["lock", "false"]] },
  {
    section: "Pen",
    rows: [["stroke", "0077bd"], ["stroke-opacity", "1.000000"], ["stroke-width", "1.000000"], ["stroke-linecap", "butt"], ["stroke-linejoin", "miter"], ["stroke-dasharray", ""]],
  },
  { section: "Layout", rows: [["x", "0"], ["y", "0"], ["width", "650"], ["height", "650"]] },
  {
    section: "Transform",
    rows: [["translate-x", "1126.188354"], ["translate-y", "221.428894"], ["rotate", "0.000000"], ["scale-x", "1.000000"], ["scale-y", "1.000000"], ["center-x", "0.000000"], ["center-y", "0.000000"]],
  },
];

function PropertiesPanel() {
  return (
    <aside className="flex w-[320px] shrink-0 flex-col">
      <div className="border-b border-l border-[#e8e8e8] bg-[#f0f0f0]">
        <PanelHeader title="Properties" />
        <div className="pl-[2px] pr-1">
          <div className="relative pb-px pt-[2px]">
            <select aria-label="Object" className="block h-[23px] w-full appearance-none border border-[#a4a4a4] bg-[#e1e1e1] px-[3px] text-black">
              <option>Properties Window</option>
            </select>
            <svg className="pointer-events-none absolute right-[5px] top-[11px]" width="9" height="6" viewBox="0 0 9 6" fill="none" stroke="#444" aria-hidden="true"><path d="M.5 .5l4 4 4-4" /></svg>
          </div>
          <div className="flex h-[23px] items-center gap-[11px] bg-linear-to-b from-[#d2d5da] to-[#8f959e] pl-[6px]">
            <button aria-label="Sort alphabetically">
              <svg width="16" height="16" viewBox="0 0 16 16" fill="none" aria-hidden="true">
                <path d="M1 7l2.500-6.500L6 7M2 5h3.500" stroke="#2a56b8" />
                <path d="M1 9.500h4.500L1 15.500h5" stroke="#b02a2a" />
                <path d="M12.500 1v12M10 11l2.500 3.500L15 11" stroke="#111" strokeWidth="1.3" />
              </svg>
            </button>
            <button aria-label="Categorized" className="-ml-px">
              <svg width="12" height="14" viewBox="0 0 12 14" aria-hidden="true">
                <rect x=".5" y=".5" width="11" height="13" fill="#fff" stroke="#2a56b8" />
                <rect x="1" y="1" width="10" height="2.5" fill="#3a78d8" />
                <path d="M2 5.500h2M5 5.500h5M2 7.500h2M5 7.500h5M2 9.500h2M5 9.500h5M2 11.500h2M5 11.500h5" stroke="#2a56b8" />
              </svg>
            </button>
            <button aria-label="Events">
              <svg width="10" height="14" viewBox="0 0 10 14" aria-hidden="true"><path d="M6.500 0L0 7h3.500L1 14l8-8H6l4-6z" fill="#ffb400" stroke="#f07c00" strokeWidth=".8" /></svg>
            </button>
            <button aria-label="Variables">
              <svg width="9" height="11" viewBox="0 0 9 11" fill="none" stroke="#22cc22" strokeWidth="2.4" aria-hidden="true"><path d="M1 0l3.500 9L8 0" /></svg>
            </button>
          </div>
          <div className="flex h-[23px] items-center border-b border-[#c8c8c8] bg-linear-to-b from-[#fafafa] to-[#ececec] text-black">
            <span className="w-[158px] pl-[5px]">Property</span>
            <span className="flex h-full flex-1 items-center border-l border-[#c8c8c8] pl-[5px]">Value</span>
          </div>
          <div className="flex text-[12px]">
            <table className="flex-1 table-fixed border-separate border-spacing-0 bg-[#454545] text-white">
              <colgroup>
                <col className="w-[158px]" />
                <col />
              </colgroup>
              {PROPS.map((p) => (
                <tbody key={p.section}>
                  <tr className="h-[19px]">
                    <th colSpan={2} className="border-b border-[#262626] p-0 pl-[5px] text-left font-bold leading-[18px]">
                      <span className="flex items-center gap-[9px]">
                        <Expander />
                        {p.section}
                      </span>
                    </th>
                  </tr>
                  {p.rows.map(([k, v]) => (
                    <tr key={k} className="h-[19px]">
                      <td className="border-b border-r border-[#262626] p-0 pl-[23px] leading-[18px]">{k}</td>
                      <td className="border-b border-[#262626] p-0 pl-1 leading-[18px]">
                        {k === "stroke" ? (
                          <span className="flex items-center gap-[5px]">
                            <span className="-ml-[2px] size-4 border border-black bg-[#0077bd]" />
                            {v}
                          </span>
                        ) : (
                          v
                        )}
                      </td>
                    </tr>
                  ))}
                </tbody>
              ))}
            </table>
            <div className="flex w-4 flex-col items-center bg-[#f0f0f0] pb-1 pt-1">
              <Chevron dir="up" />
              <span className="mt-1 h-[131px] w-[15px] bg-[#cdcdcd]" />
              <Chevron dir="down" className="mt-auto" />
            </div>
          </div>
        </div>
      </div>
      <div className="flex h-[21px] items-center gap-[9px] pl-1 text-white">
        <button className="flex h-full items-center gap-[2px] rounded-b-[3px] border border-t-0 border-[#c8eef0] bg-linear-to-b from-[#d8dae2] to-[#f6f8fa] pl-px pr-1 text-black">
          <svg width="16" height="15" viewBox="0 0 16 15" aria-hidden="true">
            <path d="M1.500 5.500h9v9h-9z" fill="#fff" stroke="#6f8fc0" />
            <path d="M3 9.500h2M6 9.500h4M3 12h2M6 12h4" stroke="#4a70b8" />
            <path d="M3 5l5-4h5l3 3-1 3-4 1-3-2-2 1z" fill="#e8b830" stroke="#7a6418" strokeWidth=".8" />
          </svg>
          Properties
        </button>
        <button>Logic</button>
        <button className="ml-1">HMI</button>
      </div>
    </aside>
  );
}

/* ---------- frame ---------- */

function TitleBar() {
  return (
    <header className="relative flex h-6 shrink-0 items-start bg-white">
      <div className="ml-[38px] flex h-[21px] w-[62px] items-center gap-2 rounded-r-full border border-t-0 border-[#c4cad4] bg-[#e8ecf3] pl-[14px]">
        <button aria-label="Undo"><svg width="14" height="10" viewBox="0 0 14 10" fill="#0aa5e8" aria-hidden="true"><path d="M0 5l6-5v2.500h7v5H6V10z" /></svg></button>
        <button aria-label="Redo"><svg width="14" height="10" viewBox="0 0 14 10" fill="#6fcbf2" aria-hidden="true"><path d="M14 5L8 0v2.500H1v5h7V10z" /></svg></button>
      </div>
      <button aria-label="Customize toolbar" className="ml-[9px] mt-[7px]">
        <svg width="5" height="7" viewBox="0 0 5 7" fill="#333" aria-hidden="true"><path d="M0 0h5v1H0zM0 3h5L2.500 6z" /></svg>
      </button>
      <h1 className="flex-1 pl-5 text-center text-[12px] leading-[21px] text-black">C:₩Users₩ENUG515₩OneDrive - 이희보₩바탕 화면₩LH₩enuProject₩server₩server.enup</h1>
      <div className="flex items-center gap-9 pr-[17px] pt-[5px]">
        <button aria-label="Minimize"><svg width="10" height="10" stroke="#888" aria-hidden="true"><path d="M0 5.500h10" /></svg></button>
        <button aria-label="Maximize"><svg width="10" height="10" stroke="#888" fill="none" aria-hidden="true"><path d="M.5 .5h9v9h-9z" /></svg></button>
        <button aria-label="Close"><svg width="11" height="10" stroke="#888" aria-hidden="true"><path d="M.5 0l10 10M10.500 0l-10 10" /></svg></button>
      </div>
      <button aria-label="Application menu" className="absolute left-[1px] top-[1px] z-10"><AppLogo /></button>
    </header>
  );
}

function RibbonTabs() {
  return (
    <nav className="flex h-[23px] shrink-0 items-end pl-[45px] pr-[5px] text-white">
      {["Home", "System/Database", "Page Layout", "Contour", "Instructor Station"].map((t) => (
        <button
          key={t}
          className={
            t === "Contour"
              ? "mx-[3px] h-[22px] rounded-t-[4px] border border-b-0 border-[#c8e8ea] bg-linear-to-b from-[#f2f4f7] to-[#d4d7de] px-[11px] pt-[2px] text-black"
              : "h-[22px] px-[14px] pt-[2px]"
          }
        >
          {t}
        </button>
      ))}
      <button aria-label="Help" className="mb-1 ml-auto size-4 bg-[#383838] text-[15px] font-bold leading-4 text-[#f6b81c]">?</button>
    </nav>
  );
}

function StatusBar() {
  return (
    <footer className="flex h-[22px] shrink-0 items-stretch justify-between bg-linear-to-b from-[#3f434d] from-30% to-[#2f2d2e] to-40% text-white">
      <p className="pl-2 leading-[22px]">Simulation Time : 00:00:00.0</p>
      <div className="relative flex w-[230px] items-center border-l border-[#111] bg-linear-to-b from-[#9b9b9d] to-[#5d5d5f] pl-2">
        <button aria-label="Zoom out"><RoundIcon d="M4 8h8" /></button>
        <div className="relative mx-[7px] h-4 w-[86px]">
          <svg className="absolute inset-0" width="86" height="16" stroke="#f0f0f0" aria-hidden="true"><path d="M0 8.500h86M43.500 6v5" /></svg>
          <input
            aria-label="Zoom"
            type="range"
            min="10"
            max="200"
            defaultValue="36"
            className="relative block h-4 w-full appearance-none bg-transparent [&::-webkit-slider-thumb]:h-3 [&::-webkit-slider-thumb]:w-[9px] [&::-webkit-slider-thumb]:appearance-none [&::-webkit-slider-thumb]:rounded-b-[5px] [&::-webkit-slider-thumb]:border [&::-webkit-slider-thumb]:border-[#444] [&::-webkit-slider-thumb]:bg-[#dcdcdc]"
          />
        </div>
        <button aria-label="Zoom in"><RoundIcon d="M4 8h8M8 4v8" /></button>
        <span className="ml-[11px] w-[37px]">45%</span>
        <button className="h-[17px] w-5 rounded-[2px] bg-[#dedede] text-center text-[8px] font-bold leading-[8px] text-black">100<br />%</button>
        <svg className="absolute bottom-0 right-0" width="11" height="11" fill="#222" aria-hidden="true">
          <path d="M8 0h2v2H8zM4 4h2v2H4zM8 4h2v2H8zM0 8h2v2H0zM4 8h2v2H4zM8 8h2v2H8z" />
        </svg>
      </div>
    </footer>
  );
}

function RoundIcon({ d }: { d: string }) {
  return (
    <svg width="16" height="16" viewBox="0 0 16 16" aria-hidden="true">
      <circle cx="8" cy="8" r="7" fill="#d8d8d8" stroke="#555" />
      <path d={d} stroke="#444" strokeWidth="2" />
    </svg>
  );
}

export default function App() {
  return (
    <div className="flex h-screen min-h-[600px] flex-col bg-[#535353] font-['Noto_Sans','Noto_Sans_CJK_KR',sans-serif] text-[11px] text-black">
      <TitleBar />
      <RibbonTabs />
      <Ribbon />
      <div className="mt-[3px] flex min-h-0 flex-1 gap-1 pb-[2px] pr-px">
        <ProjectExplorer />
        <div className="flex min-w-0 flex-1 flex-col gap-[5px]">
          <DocumentArea />
          <OutputPanel />
        </div>
        <PropertiesPanel />
      </div>
      <StatusBar />
    </div>
  );
}
